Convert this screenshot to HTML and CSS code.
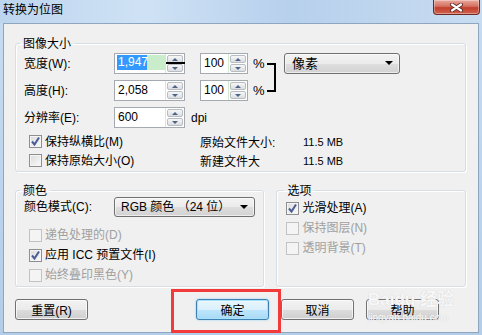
FILE: index.html
```html
<!DOCTYPE html>
<html lang="zh-CN">
<head>
    <meta charset="UTF-8">
    <title>转换为位图</title>
    <link rel="stylesheet" href="styles.css">
</head>
<body>
    <div class="window">
        <div class="titlebar">
            <span class="title">转换为位图</span>
            <span class="close-btn">
                <svg width="13" height="9" viewBox="0 0 13 9">
                    <path d="M2 1.5 L11 7.5 M11 1.5 L2 7.5" stroke="#5a2a26" stroke-width="4" stroke-linecap="round"/>
                    <path d="M2 1.5 L11 7.5 M11 1.5 L2 7.5" stroke="#fff" stroke-width="2.2" stroke-linecap="round"/>
                </svg>
            </span>
        </div>

        <div class="client">
            <fieldset class="group size-group">
                <legend>图像大小</legend>
                <div class="size-grid">
                    <span class="lbl">宽度(W):</span>
                    <div class="spin">
                        <span class="field green"><span class="sel">1,947</span></span>
                        <span class="spin-btns linked"><i class="up"></i><i class="down"></i></span>
                    </div>
                    <div class="spin pct">
                        <span class="field">100</span>
                        <span class="spin-btns"><i class="up"></i><i class="down"></i></span>
                    </div>
                    <span class="unit">%</span>
                    <span class="bracket"></span>
                    <div class="combo unit-combo">像素<i class="arrow"></i></div>

                    <span class="lbl">高度(H):</span>
                    <div class="spin">
                        <span class="field">2,058</span>
                        <span class="spin-btns"><i class="up"></i><i class="down"></i></span>
                    </div>
                    <div class="spin pct">
                        <span class="field">100</span>
                        <span class="spin-btns"><i class="up"></i><i class="down"></i></span>
                    </div>
                    <span class="unit">%</span>

                    <span class="lbl">分辨率(E):</span>
                    <div class="spin">
                        <span class="field">600</span>
                        <span class="spin-btns"><i class="up"></i><i class="down"></i></span>
                    </div>
                    <span class="dpi">dpi</span>
                </div>

                <div class="check-list">
                    <div class="check-row">
                        <span class="check checked"><svg width="11" height="11" viewBox="0 0 11 11"><path d="M2 5.5 L4.5 8.5 L9 1.5" fill="none" stroke="#4a5d94" stroke-width="2"/></svg></span>
                        <span class="check-text">保持纵横比(M)</span>
                        <span class="info-label">原始文件大小:</span>
                        <span class="info-val">11.5 MB</span>
                    </div>
                    <div class="check-row">
                        <span class="check"></span>
                        <span class="check-text">保持原始大小(O)</span>
                        <span class="info-label">新建文件大</span>
                        <span class="info-val">11.5 MB</span>
                    </div>
                </div>
            </fieldset>

            <div class="lower">
                <fieldset class="group color-group">
                    <legend>颜色</legend>
                    <div class="mode-row">
                        <span class="lbl">颜色模式(C):</span>
                        <div class="combo mode-combo">RGB 颜色 （24 位）<i class="arrow"></i></div>
                    </div>
                    <div class="check-row disabled">
                        <span class="check"></span>
                        <span class="check-text">递色处理的(D)</span>
                    </div>
                    <div class="check-row">
                        <span class="check checked"><svg width="11" height="11" viewBox="0 0 11 11"><path d="M2 5.5 L4.5 8.5 L9 1.5" fill="none" stroke="#4a5d94" stroke-width="2"/></svg></span>
                        <span class="check-text">应用 ICC 预置文件(I)</span>
                    </div>
                    <div class="check-row disabled">
                        <span class="check"></span>
                        <span class="check-text">始终叠印黑色(Y)</span>
                    </div>
                </fieldset>

                <fieldset class="group option-group">
                    <legend>选项</legend>
                    <div class="check-row">
                        <span class="check checked"><svg width="11" height="11" viewBox="0 0 11 11"><path d="M2 5.5 L4.5 8.5 L9 1.5" fill="none" stroke="#4a5d94" stroke-width="2"/></svg></span>
                        <span class="check-text">光滑处理(A)</span>
                    </div>
                    <div class="check-row disabled">
                        <span class="check"></span>
                        <span class="check-text">保持图层(N)</span>
                    </div>
                    <div class="check-row disabled">
                        <span class="check"></span>
                        <span class="check-text">透明背景(T)</span>
                    </div>
                </fieldset>
            </div>

            <div class="buttons">
                <button class="btn reset">重置(R)</button>
                <button class="btn default">确定</button>
                <button class="btn">取消</button>
                <button class="btn">帮助</button>
            </div>

            <div class="highlight"></div>
            <div class="watermark">
                <span class="wm-logo">Baidu 经验</span>
                <span class="wm-url">jingyan.baidu.com</span>
            </div>
        </div>
    </div>
</body>
</html>
```

FILE: styles.css
```css
* {
    margin: 0;
    padding: 0;
    box-sizing: border-box;
}

body {
    font-family: "Liberation Sans", "Noto Sans CJK SC", sans-serif;
    font-size: 12px;
    color: #000;
    background: #b9d1ea;
}

.window {
    width: 482px;
    height: 335px;
    background: linear-gradient(#c6dcf2, #b3cde9);
    overflow: hidden;
}

.titlebar {
    height: 23px;
    display: flex;
    justify-content: space-between;
    align-items: flex-start;
    background: linear-gradient(90deg, #bdd5ee 0%, #cfe2f5 30%, #b7d0ec 60%, #c8dcf1 100%);
}

.title {
    padding: 4px 0 0 3px;
    line-height: 13px;
}

.close-btn {
    width: 47px;
    height: 15px;
    margin-right: 2px;
    display: flex;
    align-items: center;
    justify-content: center;
    border: 1px solid #6b2b25;
    border-top: none;
    border-radius: 0 0 4px 4px;
    background: linear-gradient(#e9a99c 0%, #d47161 45%, #c13f2c 55%, #d2614f 100%);
    box-shadow: inset 0 0 0 1px rgba(255,255,255,0.35);
}

.client {
    position: relative;
    width: 476px;
    height: 310px;
    margin-left: 3px;
    padding: 12px 12px 0 11px;
    background: #f0f0f0;
    border: 1px solid #8ea6c0;
}

.group {
    border: 1px solid #d5dfe5;
    border-radius: 3px;
    box-shadow: inset 1px 1px 0 #fff, 1px 1px 0 #fff;
}

.group legend {
    margin-left: -4px;
    padding: 2px 3px 0;
    line-height: 12px;
}

.size-group {
    padding: 3px 8px 1px;
}

.size-grid {
    display: grid;
    grid-template-columns: 90px 71px 15px 48px 19px 17px 116px;
    grid-template-rows: 21px 21px 21px;
    row-gap: 6px;
    align-items: center;
}

.lbl {
    grid-column: 1;
    line-height: 14px;
}

.spin {
    grid-column: 2;
    height: 21px;
    display: flex;
    border: 1px solid #a5a9b0;
    background: #fff;
}

.spin.pct {
    grid-column: 4;
}

.field {
    flex: 1;
    padding: 0 0 0 3px;
    line-height: 18px;
}

.field.green {
    padding: 1px 0 1px 2px;
}

.field.green .sel {
    display: block;
    height: 15px;
    line-height: 15px;
    padding-left: 1px;
    background: linear-gradient(90deg, #3399ff 0 30px, #c9eccb 30px);
    color: #fff;
}

.spin-btns {
    position: relative;
    width: 19px;
    display: flex;
    flex-direction: column;
    gap: 1px;
    padding: 1px;
    border-left: 1px solid #cfeccf;
}

.spin-btns i {
    flex: 1;
    display: flex;
    align-items: center;
    justify-content: center;
    border: 1px solid #b8bcc3;
    border-radius: 2px;
    background: linear-gradient(#f7f7f7, #dcdde0);
}

.spin-btns i::before {
    content: '';
    border-left: 3px solid transparent;
    border-right: 3px solid transparent;
}

.spin-btns .up::before {
    border-bottom: 3px solid #4d6388;
}

.spin-btns .down::before {
    border-top: 3px solid #4d6388;
}

.spin-btns.linked::after {
    content: '';
    position: absolute;
    left: 0;
    right: -1px;
    top: 8px;
    height: 2px;
    background: #000;
}

.unit {
    grid-column: 5;
    padding-left: 5px;
    font-size: 13px;
}

.bracket {
    grid-column: 6;
    grid-row: 1 / 3;
    align-self: start;
    width: 9px;
    height: 29px;
    margin-top: 10px;
    border: 2px solid #000;
    border-left: none;
}

.combo {
    position: relative;
    height: 21px;
    padding-left: 7px;
    line-height: 19px;
    border: 1px solid #707070;
    border-radius: 3px;
    background: linear-gradient(#f3f3f3 0%, #ebebeb 50%, #dedede 51%, #d2d2d2 100%);
    box-shadow: inset 0 0 0 1px rgba(255,255,255,0.6);
}

.combo .arrow {
    position: absolute;
    right: 6px;
    top: 7px;
    border-left: 4px solid transparent;
    border-right: 4px solid transparent;
    border-top: 4px solid #000;
}

.unit-combo {
    grid-column: 7;
    grid-row: 1;
    font-size: 13px;
}

.dpi {
    grid-column: 3 / 6;
    grid-row: 3;
    padding-left: 6px;
}

.check-list {
    margin-top: 4px;
}

.check-row {
    height: 19px;
    display: flex;
    align-items: center;
}

.check {
    width: 13px;
    height: 13px;
    margin: 0 3px 0 5px;
    display: flex;
    align-items: center;
    justify-content: center;
    border: 1px solid #8e8f8f;
    background: linear-gradient(135deg, #dcdcdc, #fafafa);
    box-shadow: inset 0 0 0 1px #f4f4f4;
}

.check-text {
    width: 155px;
    line-height: 14px;
}

.info-label {
    width: 103px;
}

.info-val {
    font-size: 11px;
}

.disabled {
    color: #a0a0a0;
}

.disabled .check {
    border-color: #c2c2c2;
    background: #f4f4f4;
    box-shadow: none;
}

.lower {
    display: flex;
    gap: 12px;
    margin-top: 11px;
}

.color-group {
    width: 250px;
    padding: 0 8px 1px;
}

.mode-row {
    height: 20px;
    display: flex;
    align-items: center;
    margin-bottom: 8px;
}

.mode-row .lbl {
    width: 90px;
}

.mode-combo {
    width: 141px;
    height: 20px;
    padding-left: 6px;
    line-height: 18px;
}

.color-group .check-row,
.option-group .check-row {
    height: 20px;
}

.option-group {
    width: 190px;
    padding: 1px 4px 1px;
}

.option-group legend {
    margin-left: 3px;
}

.option-group .check {
    margin-left: 5px;
}

.buttons {
    display: flex;
    margin-top: 12px;
}

.btn {
    width: 73px;
    height: 21px;
    font: inherit;
    color: #000;
    border: 1px solid #707070;
    border-radius: 3px;
    background: linear-gradient(#f2f2f2 0%, #ebebeb 50%, #dddddd 51%, #cfcfcf 100%);
    box-shadow: inset 0 0 0 1px rgba(255,255,255,0.7);
    margin-left: 12px;
}

.btn.reset {
    margin-left: 0;
}

.btn.default {
    margin-left: 108px;
    border-color: #3c7fb1;
    background: linear-gradient(#eaf6fd 0%, #d9f0fc 50%, #bee6fd 51%, #a7d9f5 100%);
    box-shadow: inset 0 0 0 1px #a8e3fb, 0 0 2px #7ec9f2;
}

.highlight {
    position: absolute;
    left: 167px;
    top: 265px;
    width: 110px;
    height: 44px;
    border: 3px solid #f23a3a;
}

.watermark {
    position: absolute;
    left: 364px;
    top: 266px;
    display: flex;
    flex-direction: column;
    color: #f7f7f7;
    text-shadow: 0 0 1px #c8c8c8;
    pointer-events: none;
}

.wm-logo {
    font-size: 17px;
    font-weight: bold;
    line-height: 20px;
}

.wm-url {
    font-size: 10px;
    line-height: 12px;
    margin-top: 2px;
}
```
